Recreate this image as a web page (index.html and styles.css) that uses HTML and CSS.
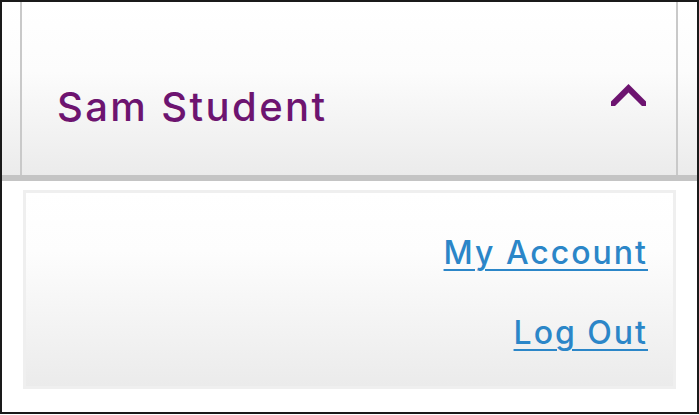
FILE: index.html
```html
<!DOCTYPE html>
<html>
<head>
<meta charset="utf-8">
<link rel="stylesheet" href="styles.css">
</head>
<body>
<div class="frame">
  <div class="header">
    <div class="header-inner">
      <span class="name">Sam Student</span>
      <svg class="chevron" width="35" height="22" viewBox="0 0 35 22"><polygon points="0,17.5 17.5,0 35,17.5 35,22 31,22 17.5,8.5 4,22 0,22" fill="#6d1470"/></svg>
    </div>
  </div>
  <div class="divider"></div>
  <div class="menu-wrap">
    <div class="menu">
      <a class="link" href="#">My Account</a>
      <a class="link" href="#">Log Out</a>
    </div>
  </div>
</div>
</body>
</html>
```
FILE: styles.css
```css
html, body {
  margin: 0;
  padding: 0;
  background: #fff;
}
.frame {
  width: 699px;
  height: 414px;
  box-sizing: border-box;
  border: 2px solid #1a1a1a;
  display: flex;
  flex-direction: column;
  font-family: Inter, "DejaVu Sans", sans-serif;
  font-weight: 500;
}
.header {
  height: 173px;
  padding: 0 19px 0 18px;
  background: linear-gradient(to bottom, #ffffff 0%, #fcfcfc 40%, #ebebeb 100%);
  display: flex;
}
.header-inner {
  flex: 1;
  border-left: 2px solid #c9c9c9;
  border-right: 2px solid #c9c9c9;
  display: flex;
  align-items: center;
  justify-content: space-between;
  padding: 36px 30px 0 35px;
}
.name {
  font-size: 40px;
  letter-spacing: 2.4px;
  color: #6d1470;
  line-height: 46px;
}
.chevron {
  display: block;
  margin-bottom: 24px;
}
.divider {
  height: 6px;
  background: #c4c4c4;
}
.menu-wrap {
  flex: 1;
  padding: 9px 21px 23px 21px;
  display: flex;
}
.menu {
  flex: 1;
  border: 3px solid #efefef;
  background: linear-gradient(to bottom, #ffffff 0%, #fdfdfd 30%, #ebebeb 100%);
  display: flex;
  flex-direction: column;
  align-items: flex-end;
  padding: 40px 25px 0 0;
}
.link {
  display: block;
  font-size: 32px;
  line-height: 40px;
  letter-spacing: 2px;
  color: #2b86c8;
  text-decoration: underline;
  text-decoration-thickness: 2px;
  text-underline-offset: 5px;
}
.link + .link {
  margin-top: 40px;
}
```
